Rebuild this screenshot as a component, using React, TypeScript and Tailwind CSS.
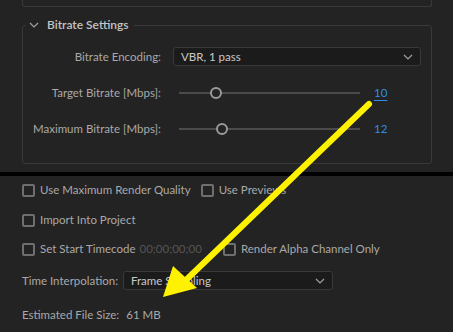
import React from 'react';

const Check = ({ label }: { label: string }) => (
  <div className="flex items-center">
    <span className="w-[13px] h-[13px] border-2 border-[#6f6f6f] rounded-[2px] shrink-0" />
    <span className="ml-[5px] whitespace-nowrap">{label}</span>
  </div>
);

const Chevron = () => (
  <svg width="10" height="6" viewBox="0 0 10 6" className="shrink-0">
    <path d="M1 1 L5 5 L9 1" fill="none" stroke="#a0a0a0" strokeWidth="1.2" />
  </svg>
);

const Slider = ({ pos, value, underline }: { pos: number; value: string; underline?: boolean }) => (
  <div className="flex items-center">
    <div className="relative w-[181px] h-[12px] flex items-center">
      <div className="w-full h-[2px] bg-[#4b4b4b]" />
      <div
        className="absolute top-0 w-[12px] h-[12px] rounded-full border-2 border-[#9a9a9a] bg-[#232323]"
        style={{ left: pos }}
      />
    </div>
    <span className={`ml-[14px] text-[#2f8ee8] ${underline ? 'underline underline-offset-[3px]' : ''}`}>{value}</span>
  </div>
);

const App: React.FC = () => {
  return (
    <div className="relative w-[453px] h-[332px] overflow-hidden bg-[#232323] text-[11.5px] text-[#a9a9a9] font-['Lato',sans-serif]">
      {/* top box edge */}
      <div className="ml-[22px] w-[410px] h-[7px] border-x border-b border-[#393939] rounded-b-[3px]" />

      {/* Bitrate settings group */}
      <fieldset className="ml-[22px] mt-[9px] w-[410px] h-[148px] border border-[#393939] rounded-[3px] pl-0">
        <legend className="ml-[3px] px-[3px] flex items-center text-[12px] font-semibold text-[#c4c4c4]">
          <Chevron />
          <span className="ml-[8px] mr-[2px]">Bitrate Settings</span>
        </legend>
        <div className="flex items-center mt-[13px] h-[19px]">
          <span className="w-[138px] text-right whitespace-nowrap">Bitrate Encoding:</span>
          <div className="ml-[12px] w-[248px] h-[19px] bg-[#1b1b1b] border border-[#393939] rounded-[3px] flex items-center justify-between px-[7px] text-[#c8c8c8]">
            <span>VBR, 1 pass</span>
            <Chevron />
          </div>
        </div>
        <div className="flex items-center mt-[17px] h-[19px]">
          <span className="w-[138px] text-right whitespace-nowrap">Target Bitrate [Mbps]:</span>
          <div className="ml-[18px]">
            <Slider pos={31} value="10" underline />
          </div>
        </div>
        <div className="flex items-center mt-[17px] h-[19px]">
          <span className="w-[138px] text-right whitespace-nowrap">Maximum Bitrate [Mbps]:</span>
          <div className="ml-[18px]">
            <Slider pos={37} value="12" />
          </div>
        </div>
      </fieldset>

      {/* separator */}
      <div className="mt-[8px] h-[4px] bg-black" />

      <div className="pl-[22px] pt-[7px] flex flex-col">
        <div className="flex items-center h-[14px]">
          <Check label="Use Maximum Render Quality" />
          <div className="ml-[10px]">
            <Check label="Use Previews" />
          </div>
        </div>
        <div className="flex items-center h-[14px] mt-[16px]">
          <Check label="Import Into Project" />
        </div>
        <div className="flex items-center h-[14px] mt-[15px]">
          <Check label="Set Start Timecode" />
          <span className="ml-[4px] text-[#555555]">00;00;00;00</span>
          <div className="ml-[21px]">
            <Check label="Render Alpha Channel Only" />
          </div>
        </div>
        <div className="flex items-center h-[19px] mt-[15px]">
          <span className="w-[101px] whitespace-nowrap">Time Interpolation:</span>
          <div className="w-[210px] h-[19px] bg-[#1b1b1b] border border-[#393939] rounded-[3px] flex items-center justify-between px-[7px] text-[#c8c8c8]">
            <span>Frame Sampling</span>
            <Chevron />
          </div>
        </div>
        <div className="flex items-center h-[14px] mt-[18px]">
          <span>Estimated File Size:</span>
          <span className="ml-[7px]">61 MB</span>
        </div>
      </div>

      {/* annotation arrow */}
      <svg className="absolute inset-0 pointer-events-none" width="453" height="332" viewBox="0 0 453 332">
        <line x1="369" y1="104" x2="186" y2="280" stroke="#fff200" strokeWidth="6" strokeLinecap="round" />
        <polygon points="163,297 173,266 197,288" fill="#fff200" />
      </svg>
    </div>
  );
};

export default App;
